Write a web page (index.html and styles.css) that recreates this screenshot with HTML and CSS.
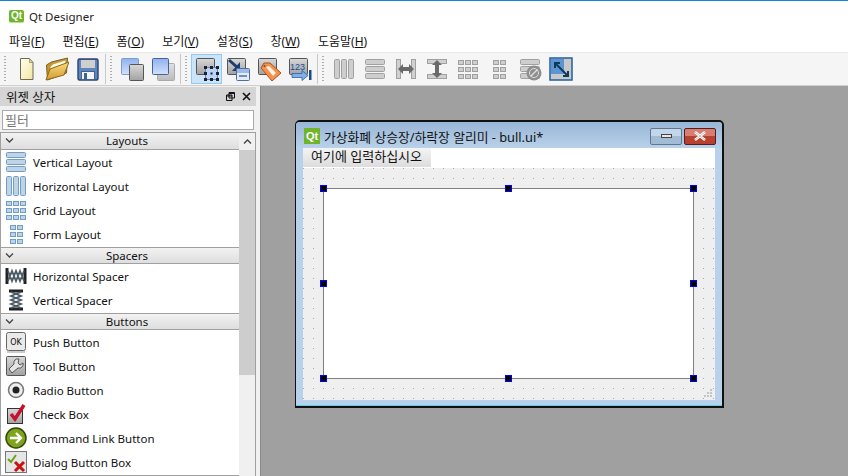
FILE: index.html
```html
<!DOCTYPE html>
<html lang="ko">

<head>
    <meta charset="UTF-8">
    <title>Qt Designer</title>
    <link rel="stylesheet" href="styles.css">
</head>

<body>
    <svg class="defs" width="0" height="0">
        <defs>
            <linearGradient id="ggray" x1="0" y1="0" x2="0" y2="1"><stop offset="0" stop-color="#d8d8d8"/><stop offset="1" stop-color="#a2a2a2"/></linearGradient>
            <linearGradient id="gblue" x1="0" y1="0" x2="0" y2="1"><stop offset="0" stop-color="#8fb2f0"/><stop offset="1" stop-color="#d3e0fa"/></linearGradient>
            <linearGradient id="gdoc" x1="0" y1="0" x2="1" y2="1"><stop offset="0" stop-color="#fffef0"/><stop offset="1" stop-color="#f3e6a0"/></linearGradient>
            <linearGradient id="gfold" x1="0" y1="0" x2="0" y2="1"><stop offset="0" stop-color="#f7dc82"/><stop offset="1" stop-color="#d89c2c"/></linearGradient>
        </defs>
        <symbol id="vbars" viewBox="0 0 24 24">
            <g fill="currentColor" fill-opacity=".45" stroke="currentColor">
                <rect x="2.500" y="2.500" width="19" height="5" rx="1"/>
                <rect x="2.500" y="9.500" width="19" height="5" rx="1"/>
                <rect x="2.500" y="16.500" width="19" height="5" rx="1"/>
            </g>
        </symbol>
        <symbol id="hbars" viewBox="0 0 24 24">
            <g fill="currentColor" fill-opacity=".45" stroke="currentColor">
                <rect x="2.500" y="2.500" width="5" height="19" rx="1"/>
                <rect x="9.500" y="2.500" width="5" height="19" rx="1"/>
                <rect x="16.500" y="2.500" width="5" height="19" rx="1"/>
            </g>
        </symbol>
        <symbol id="grid" viewBox="0 0 24 24">
            <g fill="currentColor" fill-opacity=".45" stroke="currentColor">
                <rect x="2.500" y="3.500" width="5" height="4"/><rect x="9.500" y="3.500" width="5" height="4"/><rect x="16.500" y="3.500" width="5" height="4"/>
                <rect x="2.500" y="10.500" width="5" height="4"/><rect x="9.500" y="10.500" width="5" height="4"/><rect x="16.500" y="10.500" width="5" height="4"/>
                <rect x="2.500" y="17.500" width="5" height="4"/><rect x="9.500" y="17.500" width="5" height="4"/><rect x="16.500" y="17.500" width="5" height="4"/>
            </g>
        </symbol>
        <symbol id="form" viewBox="0 0 24 24">
            <g fill="currentColor" fill-opacity=".45" stroke="currentColor">
                <rect x="6.500" y="3.500" width="5" height="4"/><rect x="13.500" y="3.500" width="5" height="4"/>
                <rect x="6.500" y="10.500" width="5" height="4"/><rect x="13.500" y="10.500" width="5" height="4"/>
                <rect x="6.500" y="17.500" width="5" height="4"/><rect x="13.500" y="17.500" width="5" height="4"/>
            </g>
        </symbol>
        <symbol id="back" viewBox="0 0 24 24">
            <rect x="1.500" y="1.500" width="18" height="16" rx="1" fill="url(#ggray)" stroke="#555"/>
        </symbol>
    </svg>

    <div class="accent"></div>
    <header class="titlebar">
        <span class="qt-logo">Qt</span>
        <span>Qt Designer</span>
    </header>

    <nav class="menubar">
        <span class="menu">파일(<u>F</u>)</span>
        <span class="menu">편집(<u>E</u>)</span>
        <span class="menu">폼(<u>O</u>)</span>
        <span class="menu">보기(<u>V</u>)</span>
        <span class="menu">설정(<u>S</u>)</span>
        <span class="menu">창(<u>W</u>)</span>
        <span class="menu">도움말(<u>H</u>)</span>
    </nav>

    <div class="toolbar">
        <div class="tool-group">
            <i class="grip"></i>
            <span class="tool"><svg viewBox="0 0 24 24"><path d="M6.500 1.500h9l3.500 4v17h-12.500z" fill="url(#gdoc)" stroke="#6f6a55"/><path d="M15.500 1.500v4h3.500z" fill="#e6d98e" stroke="#8a8466" stroke-width=".7"/></svg></span>
            <span class="tool"><svg viewBox="0 0 24 24"><path d="M1.500 8l5-3 16-4-1 15-19 7z" fill="#c9962e" stroke="#7c6322"/><path d="M5 10l3-3 13-4-1 9-15 6z" fill="#fdf8df" stroke="#b69a4c" stroke-width=".7"/><path d="M1 23l4-11 19-7-5 13z" fill="url(#gfold)" stroke="#86691f"/></svg></span>
            <span class="tool"><svg viewBox="0 0 24 24"><rect x="2" y="2" width="20" height="21" rx="1.500" fill="#5f86bd" stroke="#2a4470" stroke-width="1.400"/><rect x="5" y="3" width="14" height="8" fill="#cfcfcf"/><rect x="5.500" y="14.500" width="13" height="8" fill="#f2f5fa" stroke="#44618f"/><rect x="8" y="16" width="3" height="6" fill="#44618f"/></svg></span>
        </div>
        <div class="tool-group">
            <i class="grip"></i>
            <span class="tool"><svg viewBox="0 0 24 24"><rect x="1.500" y="1.500" width="17" height="16" rx="1" fill="url(#gblue)" stroke="#7f9bd0"/><rect x="9.500" y="7.500" width="14" height="16" rx="1" fill="url(#ggray)" stroke="#555"/></svg></span>
            <span class="tool"><svg viewBox="0 0 24 24"><rect x="6.500" y="6.500" width="17" height="17" rx="1" fill="url(#ggray)" stroke="#aaa" fill-opacity=".7"/><rect x="1.500" y="1.500" width="16" height="16" rx="1" fill="url(#gblue)" stroke="#44619a"/></svg></span>
        </div>
        <div class="tool-group">
            <i class="grip"></i>
            <span class="tool tool-on"><svg viewBox="0 0 24 24"><use href="#back"/><rect x="10.500" y="10.500" width="12" height="12" fill="#bcd2fa" stroke="#6c7fa0"/><path d="M9 9h3v3H9zM15 9h3v3h-3zM21 9h3v3h-3zM9 15h3v3H9zM15.500 15.500h2v2h-2zM21 15h3v3h-3zM9 21h3v3H9zM15 21h3v3h-3zM21 21h3v3h-3z" fill="#1a2230"/></svg></span>
            <span class="tool"><svg viewBox="0 0 24 24"><use href="#back"/><path d="M3 3l9 8" stroke="#1e3c6e" stroke-width="3"/><path d="M14 5v9H6z" fill="#1e3c6e"/><rect x="10.500" y="11.500" width="13" height="12" rx="1" fill="#e4ecf8" stroke="#4b6ea6"/><rect x="11" y="12" width="12" height="4" fill="#9dbbe6"/><rect x="13" y="18" width="8" height="2" fill="#6f8fbf"/></svg></span>
            <span class="tool"><svg viewBox="0 0 24 24"><use href="#back"/><path d="M4 11l3-5h6l11 10-9 8z" fill="#f5914a" stroke="#a8541a"/><path d="M9 10l3-1 7 7-3 3z" fill="#fff3e6"/><circle cx="7.500" cy="9" r="1" fill="#555"/></svg></span>
            <span class="tool"><svg viewBox="0 0 24 24"><use href="#back"/><text x="2" y="12.500" font-size="9" fill="#1b4b96" font-family="Liberation Sans, sans-serif">123</text><path d="M4 16.500h10v-3l6 5-6 5v-3H4z" fill="#7fb0ea" stroke="#2b5ea8" stroke-width=".8"/><rect x="21" y="13" width="2.500" height="10" fill="#1d4a8c"/></svg></span>
        </div>
        <div class="tool-group no-line">
            <i class="grip"></i>
            <span class="tool gray"><svg viewBox="0 0 24 24"><use href="#hbars"/></svg></span>
            <span class="tool gray"><svg viewBox="0 0 24 24"><use href="#vbars"/></svg></span>
            <span class="tool gray"><svg viewBox="0 0 24 24"><rect x="2.500" y="2.500" width="4" height="19" fill="#d0d0d0" stroke="#a0a0a0"/><rect x="17.500" y="2.500" width="4" height="19" fill="#d0d0d0" stroke="#a0a0a0"/><path d="M4 12l5-5v3h6V7l5 5-5 5v-3H9v3z" fill="#6a6a6a"/></svg></span>
            <span class="tool gray"><svg viewBox="0 0 24 24"><rect x="2.500" y="2.500" width="19" height="4" fill="#d0d0d0" stroke="#a0a0a0"/><rect x="2.500" y="17.500" width="19" height="4" fill="#d0d0d0" stroke="#a0a0a0"/><path d="M12 3l5 5h-3v8h3l-5 5-5-5h3V8H7z" fill="#6a6a6a"/></svg></span>
            <span class="tool gray"><svg viewBox="0 0 24 24"><use href="#grid"/></svg></span>
            <span class="tool gray"><svg viewBox="0 0 24 24"><use href="#form"/></svg></span>
            <span class="tool gray"><svg viewBox="0 0 24 24"><use href="#vbars"/><circle cx="16" cy="16" r="7.500" fill="#8e8e8e"/><path d="M12.500 19.500l7-7" stroke="#ddd" stroke-width="1.500"/><circle cx="16" cy="16" r="4.500" fill="none" stroke="#ddd"/></svg></span>
            <span class="tool"><svg viewBox="0 0 24 24"><rect x="1" y="1" width="22" height="22" fill="#c9c9c9" stroke="#1f5f9e" stroke-width="1.500"/><rect x="2" y="2" width="13" height="15" fill="#5e94d6"/><path d="M6 6l13 13M6 11V6h5M14 19h5v-5" stroke="#0d3c56" stroke-width="2" fill="none"/></svg></span>
        </div>
    </div>

    <div class="main">
        <aside class="dock">
            <div class="dock-title">
                <span class="dock-name">위젯 상자</span>
                <svg class="dock-btn" viewBox="0 0 9 9"><path d="M3 .5h5.500v5.500H3zM.5 3h5.500v5.500H.5z" fill="#d4d4d4" stroke="#111"/><path d="M3 1.500h5.500M.5 4h5.500" stroke="#111"/></svg>
                <svg class="dock-btn" viewBox="0 0 9 9"><path d="M1 1l7 7M8 1L1 8" stroke="#111" stroke-width="1.600"/></svg>
            </div>
            <div class="filter">필터</div>
            <div class="box">
                <div class="list">
                    <div class="cat"><svg class="chev" viewBox="0 0 9 5"><path d="M1 .5l3.500 3.500L8 .5" stroke="#444" stroke-width="1.300" fill="none"/></svg>Layouts</div>
                    <div class="row blue"><svg viewBox="0 0 24 24"><use href="#vbars"/></svg>Vertical Layout</div>
                    <div class="row blue"><svg viewBox="0 0 24 24"><use href="#hbars"/></svg>Horizontal Layout</div>
                    <div class="row blue"><svg viewBox="0 0 24 24"><use href="#grid"/></svg>Grid Layout</div>
                    <div class="row blue"><svg viewBox="0 0 24 24"><use href="#form"/></svg>Form Layout</div>
                    <div class="cat"><svg class="chev" viewBox="0 0 9 5"><path d="M1 .5l3.500 3.500L8 .5" stroke="#444" stroke-width="1.300" fill="none"/></svg>Spacers</div>
                    <div class="row"><svg viewBox="0 0 24 24"><path d="M3 4v16M21 4v16" stroke="#222" stroke-width="3"/><path d="M4 7l4 10 4-10 4 10 4-10M4 17L8 7l4 10 4-10 4 10" stroke="#4c5b66" stroke-width="1.800" fill="none"/></svg>Horizontal Spacer</div>
                    <div class="row"><svg viewBox="0 0 24 24"><path d="M5 3h14M5 21h14" stroke="#222" stroke-width="3"/><path d="M7 4l10 4-10 4 10 4-10 4M17 4L7 8l10 4-10 4 10 4" stroke="#4c5b66" stroke-width="1.800" fill="none"/></svg>Vertical Spacer</div>
                    <div class="cat"><svg class="chev" viewBox="0 0 9 5"><path d="M1 .5l3.500 3.500L8 .5" stroke="#444" stroke-width="1.300" fill="none"/></svg>Buttons</div>
                    <div class="row"><svg viewBox="0 0 24 24"><rect x="2.500" y="2.500" width="19" height="18" rx="2" fill="#e9e9e9" stroke="#666"/><path d="M3 22h18" stroke="#999"/><text x="12" y="15" font-size="8" text-anchor="middle" fill="#111" font-family="DejaVu Sans, sans-serif">OK</text></svg>Push Button</div>
                    <div class="row"><svg viewBox="0 0 24 24"><rect x="2.500" y="2.500" width="19" height="19" rx="1" fill="url(#ggray)" stroke="#555"/><path d="M15 5a4 4 0 0 0-5 5L5 15l3 4 6-5a4 4 0 0 0 5-5l-3 2-2-2z" fill="#e4e4e4" stroke="#555"/></svg>Tool Button</div>
                    <div class="row"><svg viewBox="0 0 24 24"><circle cx="12" cy="12" r="7.500" fill="#eee" stroke="#777" stroke-width="1.500"/><circle cx="12" cy="12" r="3.500" fill="#222"/></svg>Radio Button</div>
                    <div class="row"><svg viewBox="0 0 24 24"><rect x="3.500" y="6.500" width="15" height="15" fill="url(#ggray)" stroke="#333"/><path d="M7 12l4 5 9-14" stroke="#c8102e" stroke-width="3.500" fill="none"/></svg>Check Box</div>
                    <div class="row"><svg viewBox="0 0 24 24"><circle cx="12" cy="12" r="10" fill="#7ea41c" stroke="#33470a" stroke-width="1.500"/><path d="M6 12h11m-5-5l5 5-5 5" stroke="#fff" stroke-width="2.300" fill="none"/></svg>Command Link Button</div>
                    <div class="row"><svg viewBox="0 0 24 24"><rect x="1.500" y="1.500" width="21" height="21" fill="#e6e6e6" stroke="#777"/><path d="M4 9l3 3 5-7" stroke="#63a51c" stroke-width="2" fill="none"/><path d="M11 12l9 9m0-9l-9 9" stroke="#cc1111" stroke-width="3"/></svg>Dialog Button Box</div>
                    <div class="list-end"></div>
                </div>
                <div class="scroll">
                    <div class="scroll-up"><svg viewBox="0 0 9 5"><path d="M1 4.500L4.500 1 8 4.500" stroke="#444" stroke-width="1.300" fill="none"/></svg></div>
                    <div class="scroll-thumb"></div>
                </div>
            </div>
        </aside>

        <section class="mdi">
            <div class="subwin">
                <div class="sub-title">
                    <span class="qt-logo sub-logo">Qt</span>
                    <span class="sub-name">가상화폐 상승장/하락장 알리미 - bull.ui*</span>
                    <span class="win-btn win-min"><i></i></span>
                    <span class="win-btn win-close"><svg viewBox="0 0 14 10" width="14" height="10"><path d="M2 1l10 8M12 1L2 9" stroke="#fff" stroke-width="2.600"/><path d="M2 1l10 8M12 1L2 9" stroke="#8b8b8b" stroke-width=".5"/></svg></span>
                </div>
                <div class="form-menu"><span class="form-menu-hint">여기에 입력하십시오</span></div>
                <div class="form-body">
                    <div class="central">
                        <i class="handle h-tl"></i><i class="handle h-tc"></i><i class="handle h-tr"></i>
                        <i class="handle h-ml"></i><i class="handle h-mr"></i>
                        <i class="handle h-bl"></i><i class="handle h-bc"></i><i class="handle h-br"></i>
                    </div>
                    <svg class="size-grip" viewBox="0 0 10 10"><path d="M7 0h2v2H7zM4 3h2v2H4zM7 3h2v2H7zM1 6h2v2H1zM4 6h2v2H4zM7 6h2v2H7z" fill="#c4c4c4"/></svg>
                </div>
            </div>
        </section>
    </div>
</body>
</html>
```

FILE: styles.css
```css
* {
    margin: 0;
    padding: 0;
    box-sizing: border-box;
}

html,
body {
    width: 848px;
    height: 476px;
    overflow: hidden;
}

body {
    display: flex;
    flex-direction: column;
    background: #fff;
    color: #111;
    font-family: "Noto Sans", "Noto Sans CJK KR", sans-serif;
    font-size: 12px;
}

.defs {
    position: absolute;
}

.accent {
    height: 1px;
    background: #1583d8;
}

.titlebar {
    display: flex;
    align-items: center;
    height: 29px;
    padding: 1px 0 0 9px;
    gap: 5px;
    color: #222;
    font-size: 11.5px;
}

.qt-logo {
    flex: none;
    width: 15px;
    height: 13px;
    line-height: 12px;
    text-align: center;
    font-family: "Liberation Sans", sans-serif;
    font-size: 10px;
    font-weight: 700;
    color: #fff;
    background: #6fb52c;
    border-radius: 2px;
    border-bottom: 1px solid #c9dc8a;
}

.menubar {
    display: flex;
    align-items: center;
    height: 22px;
}

.menu {
    padding: 0 9px;
}

.toolbar {
    display: flex;
    height: 34px;
    background: #f5f5f5;
    border-top: 1px solid #e8e8e8;
    border-bottom: 1px solid #cfcfcf;
}

.tool-group {
    display: flex;
    padding-right: 2px;
    border-right: 1px solid #c8c8c8;
    margin: 1px 0;
}

.no-line {
    border-right: 0;
}

.grip {
    width: 3px;
    margin: 2px 3px 2px 4px;
    background: linear-gradient(#adadad 50%, transparent 0) 0 0 / 2px 3px repeat-y;
}

.tool {
    display: flex;
    align-items: center;
    justify-content: center;
    width: 31px;
    border: 1px solid transparent;
}

.tool svg {
    width: 24px;
    height: 24px;
}

.tool-on {
    background: #cce4f7;
    border-color: #90c8f6;
}

.gray {
    color: #a0a0a0;
}

.main {
    flex: 1;
    display: flex;
    min-height: 0;
}

.dock {
    display: flex;
    flex-direction: column;
    width: 260px;
    background: #f0f0f0;
}

.dock-title {
    display: flex;
    align-items: center;
    height: 19px;
    margin: 1px 4px 0 0;
    padding: 0 5px 0 6px;
    background: #d5d5d5;
    font-size: 12.5px;
    gap: 7px;
}

.dock-name {
    flex: 1;
}

.dock-btn {
    width: 9px;
    height: 9px;
}

.filter {
    height: 20px;
    margin: 4px 6px 0 2px;
    padding-left: 2px;
    line-height: 18px;
    background: #fff;
    border: 1px solid #a9a9a9;
    color: #777;
    font-size: 13px;
}

.box {
    flex: 1;
    display: flex;
    min-height: 0;
    margin: 2px 4px 0 0;
    border: 1px solid #a0a0a0;
    border-bottom: 0;
    background: #fff;
}

.list {
    flex: 1;
    min-width: 0;
    font-size: 11.5px;
}

.cat {
    position: relative;
    height: 17px;
    padding-left: 14px;
    line-height: 16px;
    text-align: center;
    background: linear-gradient(#f2f2f2, #dedede);
    border-bottom: 1px solid #a0a0a0;
}

.row + .cat {
    margin-top: 1px;
    border-top: 1px solid #a0a0a0;
    line-height: 15px;
}

.chev {
    position: absolute;
    left: 4px;
    top: 5px;
    width: 9px;
    height: 5px;
}

.row {
    display: flex;
    align-items: center;
    height: 24px;
    gap: 5px;
    padding-left: 3px;
}

.row svg {
    flex: none;
    width: 24px;
    height: 24px;
}

.blue svg {
    color: #6f9fc8;
}

.list-end {
    height: 1px;
    margin-top: 1px;
    background: #a0a0a0;
}

.scroll {
    flex: none;
    width: 16px;
    background: #f0f0f0;
}

.scroll-up {
    display: flex;
    align-items: center;
    justify-content: center;
    height: 17px;
}

.scroll-up svg {
    width: 9px;
    height: 5px;
}

.scroll-thumb {
    height: 225px;
    background: #cdcdcd;
}

.mdi {
    flex: 1;
    position: relative;
    background: #a0a0a0;
    border-left: 1px solid #8a8a8a;
}

.subwin {
    position: absolute;
    left: 34px;
    top: 34px;
    display: flex;
    flex-direction: column;
    width: 429px;
    height: 288px;
    padding: 0 7px 7px;
    background: #b9d1ea;
    border: 1px solid #111;
    border-width: 2px 2px 2px 1px;
    border-radius: 5px 5px 0 0;
    box-shadow: inset 0 -1px 0 #5fd0e8;
}

.sub-title {
    display: flex;
    align-items: center;
    flex: none;
    height: 26px;
    margin: 0 -7px;
    padding: 2px 6px 0 8px;
    background: linear-gradient(#98b6d6, #b9d1ea);
    border-radius: 4px 4px 0 0;
}

.sub-logo {
    width: 16px;
    height: 16px;
    line-height: 16px;
    font-size: 11px;
    border: 0;
    border-radius: 0;
}

.sub-name {
    flex: 1;
    margin-left: 4px;
    font-size: 12.8px;
    color: #111;
}

.win-btn {
    display: flex;
    align-items: center;
    justify-content: center;
    width: 32px;
    height: 17px;
    margin-left: 2px;
    border: 1px solid #5f7690;
    border-radius: 2px;
}

.win-min {
    background: linear-gradient(#c3d6ea 50%, #a3bcd6 50%);
}

.win-min i {
    width: 11px;
    height: 4px;
    background: #e8e8e8;
    border: 1px solid #444;
}

.win-close {
    background: linear-gradient(#d67f70 50%, #b8402f 50%);
    border-color: #5a1a22;
}

.form-menu {
    flex: none;
    height: 20px;
    background: #fff;
}

.form-menu-hint {
    display: inline-block;
    width: 128px;
    height: 19px;
    padding-left: 8px;
    font-size: 13px;
    line-height: 17px;
    white-space: nowrap;
    background: linear-gradient(#f4f4f4, #dcdcdc);
}

.form-body {
    flex: 1;
    position: relative;
    padding: 20px 21px 21px 20px;
    background-color: #efefef;
    background-image: linear-gradient(to right, transparent 1px, #efefef 1px), linear-gradient(#a8a8a8 1px, transparent 1px);
    background-size: 10px 10px;
}

.central {
    position: relative;
    height: 191px;
    background: #fff;
    border: 1px solid #808080;
}

.handle {
    position: absolute;
    width: 7px;
    height: 7px;
    background: #000;
    border: 1px solid #00f;
}

.h-tl, .h-ml, .h-bl { left: -4px; }
.h-tc, .h-bc { left: 181px; }
.h-tr, .h-mr, .h-br { right: -4px; }
.h-tl, .h-tc, .h-tr { top: -4px; }
.h-ml, .h-mr { top: 91px; }
.h-bl, .h-bc, .h-br { bottom: -4px; }

.size-grip {
    position: absolute;
    right: 2px;
    bottom: 1px;
    width: 10px;
    height: 10px;
}
```
